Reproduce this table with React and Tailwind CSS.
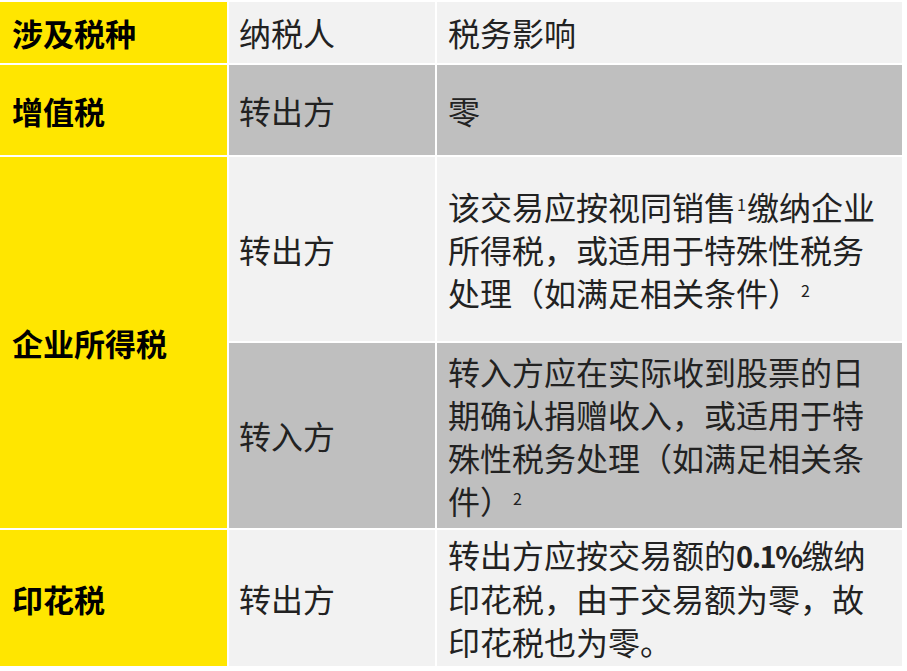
const cjk = "font-['Noto_Sans_CJK_SC','Noto_Sans',sans-serif]";

function Cell({ tone, className = '', children }) {
  const bg =
    tone === 'y' ? 'bg-[#FFE600]' : tone === 'd' ? 'bg-[#BFBFBF]' : 'bg-[#F2F2F2]';
  return (
    <div className={`${bg} flex items-center whitespace-nowrap ${className}`}>
      {children}
    </div>
  );
}

function Sup({ children }) {
  return <span className="text-[16px] leading-none align-[9px] px-[1px]">{children}</span>;
}

export default function App() {
  return (
    <div className={`w-[907px] h-[671px] bg-white pt-[2px] ${cjk} text-[32px] leading-[43px] text-[#222]`}>
      <div className="grid grid-cols-[227px_206px_465px] grid-rows-[61px_90px_184px_185px_136px] gap-[2px]">
        <Cell tone="y" className="pl-[12px] font-bold text-black text-[31px]">涉及税种</Cell>
        <Cell tone="l" className="pl-[10px]">纳税人</Cell>
        <Cell tone="l" className="pl-[11px]">税务影响</Cell>

        <Cell tone="y" className="pl-[12px] font-bold text-black text-[31px]">增值税</Cell>
        <Cell tone="d" className="pl-[10px]">转出方</Cell>
        <Cell tone="d" className="pl-[11px]">零</Cell>

        <Cell tone="y" className="row-span-2 pl-[12px] font-bold text-black text-[31px]">企业所得税</Cell>
        <Cell tone="l" className="pl-[10px]">转出方</Cell>
        <Cell tone="l" className="pl-[11px]">
          <div>
            该交易应按视同销售<Sup>1</Sup>缴纳企业
            <br />
            所得税，或适用于特殊性税务
            <br />
            处理（如满足相关条件）<Sup>2</Sup>
          </div>
        </Cell>

        <Cell tone="d" className="pl-[10px]">转入方</Cell>
        <Cell tone="d" className="pl-[11px]">
          <div>
            转入方应在实际收到股票的日
            <br />
            期确认捐赠收入，或适用于特
            <br />
            殊性税务处理（如满足相关条
            <br />
            件）<Sup>2</Sup>
          </div>
        </Cell>

        <Cell tone="y" className="pl-[12px] font-bold text-black text-[31px]">印花税</Cell>
        <Cell tone="l" className="pl-[10px]">转出方</Cell>
        <Cell tone="l" className="pl-[11px]">
          <div>
            转出方应按交易额的<span className="font-semibold text-[29px] tracking-[-1.5px]">0.1%</span>缴纳
            <br />
            印花税，由于交易额为零，故
            <br />
            印花税也为零。
          </div>
        </Cell>
      </div>
    </div>
  );
}
